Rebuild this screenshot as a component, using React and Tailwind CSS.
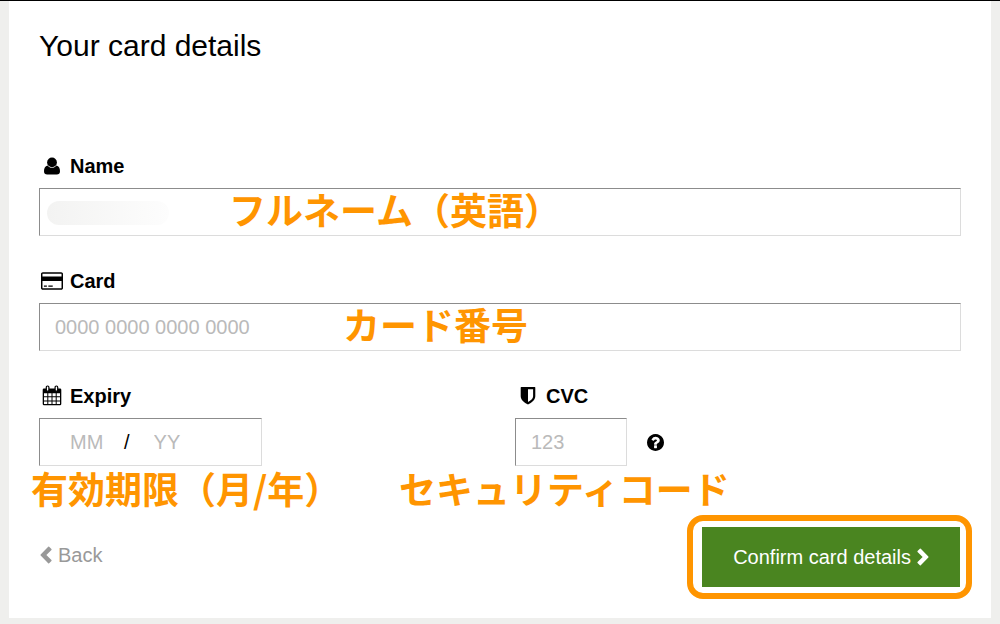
import React from "react";

const UserIcon = () => (
  <svg viewBox="0 0 18 20" className="h-5 w-[18px]" fill="currentColor" aria-hidden="true">
    <circle cx="9" cy="6.4" r="4.9" />
    <path d="M4.6 9.4C2 10 1 12.400 1 15.200C1 17.400 2.200 18.500 4.200 18.500H13.800C15.800 18.500 17 17.400 17 15.200C17 12.400 16 10 13.400 9.400C12.200 10.900 10.700 11.700 9 11.700C7.300 11.700 5.800 10.900 4.600 9.400Z" />
  </svg>
);

const CardIcon = () => (
  <svg viewBox="0 128 1920 1536" className="h-[18px] w-[22px] shrink-0" fill="currentColor" aria-hidden="true">
    <path d="M1760 128q66 0 113 47t47 113v1216q0 66-47 113t-113 47h-1600q-66 0-113-47t-47-113v-1216q0-66 47-113t113-47h1600zM160 256q-13 0-22.500 9.500t-9.500 22.500v224h1664v-224q0-13-9.500-22.500t-22.500-9.500h-1600zM1760 1536q13 0 22.500-9.500t9.500-22.500v-608h-1664v608q0 13 9.500 22.500t22.500 9.500h1600zM256 1408v-128h256v128h-256zM640 1408v-128h384v128h-384z" />
  </svg>
);

const CalendarIcon = () => (
  <svg viewBox="0 0 20 22" className="h-[22px] w-5" aria-hidden="true">
    <path fill="currentColor" d="M2 3.500H18A1.300 1.300 0 0 1 19.300 4.800V19A1.300 1.300 0 0 1 18 20.300H2A1.300 1.300 0 0 1 .7 19V4.800A1.300 1.300 0 0 1 2 3.500Z" />
    <g fill="white">
      <path d="M2 8.200h3.300v3H2zM6.300 8.200h3.200v3H6.300zM10.500 8.200h3.200v3h-3.200zM14.700 8.200H18v3h-3.300z" />
      <path d="M2 12.200h3.300v3.200H2zM6.300 12.200h3.200v3.200H6.300zM10.500 12.200h3.200v3.200h-3.200zM14.700 12.200H18v3.200h-3.300z" />
      <path d="M2 16.400h3.300v2.700H2zM6.300 16.400h3.200v2.700H6.300zM10.500 16.400h3.200v2.700h-3.200zM14.700 16.400H18v2.700h-3.300z" />
    </g>
    <g fill="white" stroke="currentColor" strokeWidth="1.200">
      <rect x="4.300" y="1" width="2.600" height="5.200" rx="1.200" />
      <rect x="13.100" y="1" width="2.600" height="5.200" rx="1.200" />
    </g>
  </svg>
);

const ShieldIcon = () => (
  <svg viewBox="0 0 16 20" className="h-5 w-4" fill="currentColor" aria-hidden="true">
    <path fillRule="evenodd" d="M1.300 1H14.700Q15.300 1 15.300 1.600V10.200C15.300 14 11.800 16.500 8 18.400C4.200 16.500.7 14 .7 10.200V1.600Q.7 1 1.300 1ZM8 3.200V15.900C10.800 14.400 13.100 12.700 13.100 10.200V3.200Z" />
  </svg>
);

const HelpIcon = () => (
  <svg viewBox="0 128 1536 1536" className="size-[17px]" fill="currentColor" aria-hidden="true">
    <path d="M896 1376v-192q0-14-9-23t-23-9h-192q-14 0-23 9t-9 23v192q0 14 9 23t23 9h192q14 0 23-9t9-23zM1152 704q0-88-55.500-163t-138.500-116-170-41q-243 0-371 213-15 24 8 42l132 100q7 6 19 6 16 0 25-12 53-68 86-92 34-24 86-24 48 0 85.500 26t37.500 59q0 38-20 61t-68 45q-63 28-115.500 86.500t-52.500 125.500v36q0 14 9 23t23 9h192q14 0 23-9t9-23q0-19 21.500-49.500t54.500-49.500q32-18 49-28.500t46-35 44.500-48 28-60.500 12.500-81zM1536 896q0 209-103 385.500t-279.500 279.500-385.500 103-385.500-103-279.500-279.500-103-385.500 103-385.500 279.500-279.500 385.500-103 385.500 103 279.500 279.500 103 385.500z" />
  </svg>
);

const Chevron = ({ className }) => (
  <svg viewBox="0 0 13 19" className={className} fill="currentColor" aria-hidden="true">
    <path d="M.6 3.100L3.100.6Q3.600.2 4.100.6L12.300 9Q12.700 9.500 12.300 10L4.100 18.400Q3.600 18.800 3.100 18.400L.6 15.900Q.2 15.400.6 14.900L6.100 9.500L.6 4.100Q.2 3.600.6 3.100Z" />
  </svg>
);

const boxClass =
  "h-12 border border-t-[#8c8c8c] border-l-[#8c8c8c] border-r-[#dcdcdc] border-b-[#dcdcdc] bg-white";
const noteClass =
  "pointer-events-none absolute whitespace-nowrap font-['Noto_Sans_CJK_JP',sans-serif] text-[37px] leading-10 font-bold text-[#ff9500]";

function FieldLabel({ htmlFor, icon, children }) {
  return (
    <label htmlFor={htmlFor} className="flex h-7 items-center gap-2 text-xl font-bold">
      <span className="flex w-[23px] justify-center pl-0.5">{icon}</span>
      {children}
    </label>
  );
}

export default function App() {
  return (
    <div className="border-t border-black bg-[#efefed] px-[9px] pb-1.5 font-['Liberation_Sans',Arial,sans-serif] text-black">
      <main className="bg-white px-[30px] pt-[27px] pb-[31px]">
        <h1 className="text-3xl leading-9">Your card details</h1>
        <form className="mt-[88px]" onSubmit={(e) => e.preventDefault()}>
          <div className="flex flex-col gap-[31px]">
            <div className="relative flex flex-col gap-2">
              <FieldLabel htmlFor="name" icon={<UserIcon />}>Name</FieldLabel>
              <input id="name" type="text" className={`${boxClass} w-full px-4 text-xl`} />
              <span className="pointer-events-none absolute bottom-[11px] left-2 h-6 w-[122px] rounded-full bg-linear-to-r from-[#f3f3f2] to-[#fdfdfd]" />
              <span className={`${noteClass} bottom-[7px] left-[190px]`}>フルネーム（英語）</span>
            </div>
            <div className="relative flex flex-col gap-2">
              <FieldLabel htmlFor="card" icon={<CardIcon />}>Card</FieldLabel>
              <input
                id="card"
                type="text"
                placeholder="0000 0000 0000 0000"
                className={`${boxClass} w-full px-[15px] text-xl placeholder:text-[#bababa]`}
              />
              <span className={`${noteClass} bottom-[7px] left-[304px]`}>カード番号</span>
            </div>
            <div className="relative grid grid-cols-2 gap-[30px]">
              <div className="flex flex-col gap-2">
                <FieldLabel htmlFor="month" icon={<CalendarIcon />}>Expiry</FieldLabel>
                <div className={`${boxClass} flex w-1/2 items-center pl-[30px] text-xl`}>
                  <input id="month" aria-label="Expiry month" placeholder="MM" className="w-[54px] placeholder:text-[#bababa]" />
                  <span>/</span>
                  <input aria-label="Expiry year" placeholder="YY" className="ml-6 w-14 placeholder:text-[#bababa]" />
                </div>
              </div>
              <div className="flex flex-col gap-2">
                <FieldLabel htmlFor="cvc" icon={<ShieldIcon />}>CVC</FieldLabel>
                <div className="flex items-center gap-5">
                  <input
                    id="cvc"
                    type="text"
                    placeholder="123"
                    className={`${boxClass} w-1/4 px-[15px] text-xl placeholder:text-[#bababa]`}
                  />
                  <button type="button" aria-label="Help">
                    <HelpIcon />
                  </button>
                </div>
              </div>
              <span className={`${noteClass} -bottom-[42px] -left-2`}>有効期限（月/年）</span>
              <span className={`${noteClass} -bottom-[42px] left-[360px]`}>セキュリティコード</span>
            </div>
          </div>
          <div className="mt-[61px] flex items-center justify-between pr-px text-xl">
            <a href="#back" className="flex items-center gap-1.5 pb-1 pl-px text-[#999999]">
              <Chevron className="h-[18px] w-3 rotate-180" />
              Back
            </a>
            <button type="submit" className="relative flex h-[60px] items-center gap-1.5 bg-[#4a8520] px-[31px] text-white">
              Confirm card details
              <Chevron className="h-[18px] w-3" />
              <span className="pointer-events-none absolute -top-3 -right-3 -bottom-3 -left-[15px] rounded-2xl border-[6px] border-[#ff9500]" />
            </button>
          </div>
        </form>
      </main>
    </div>
  );
}
